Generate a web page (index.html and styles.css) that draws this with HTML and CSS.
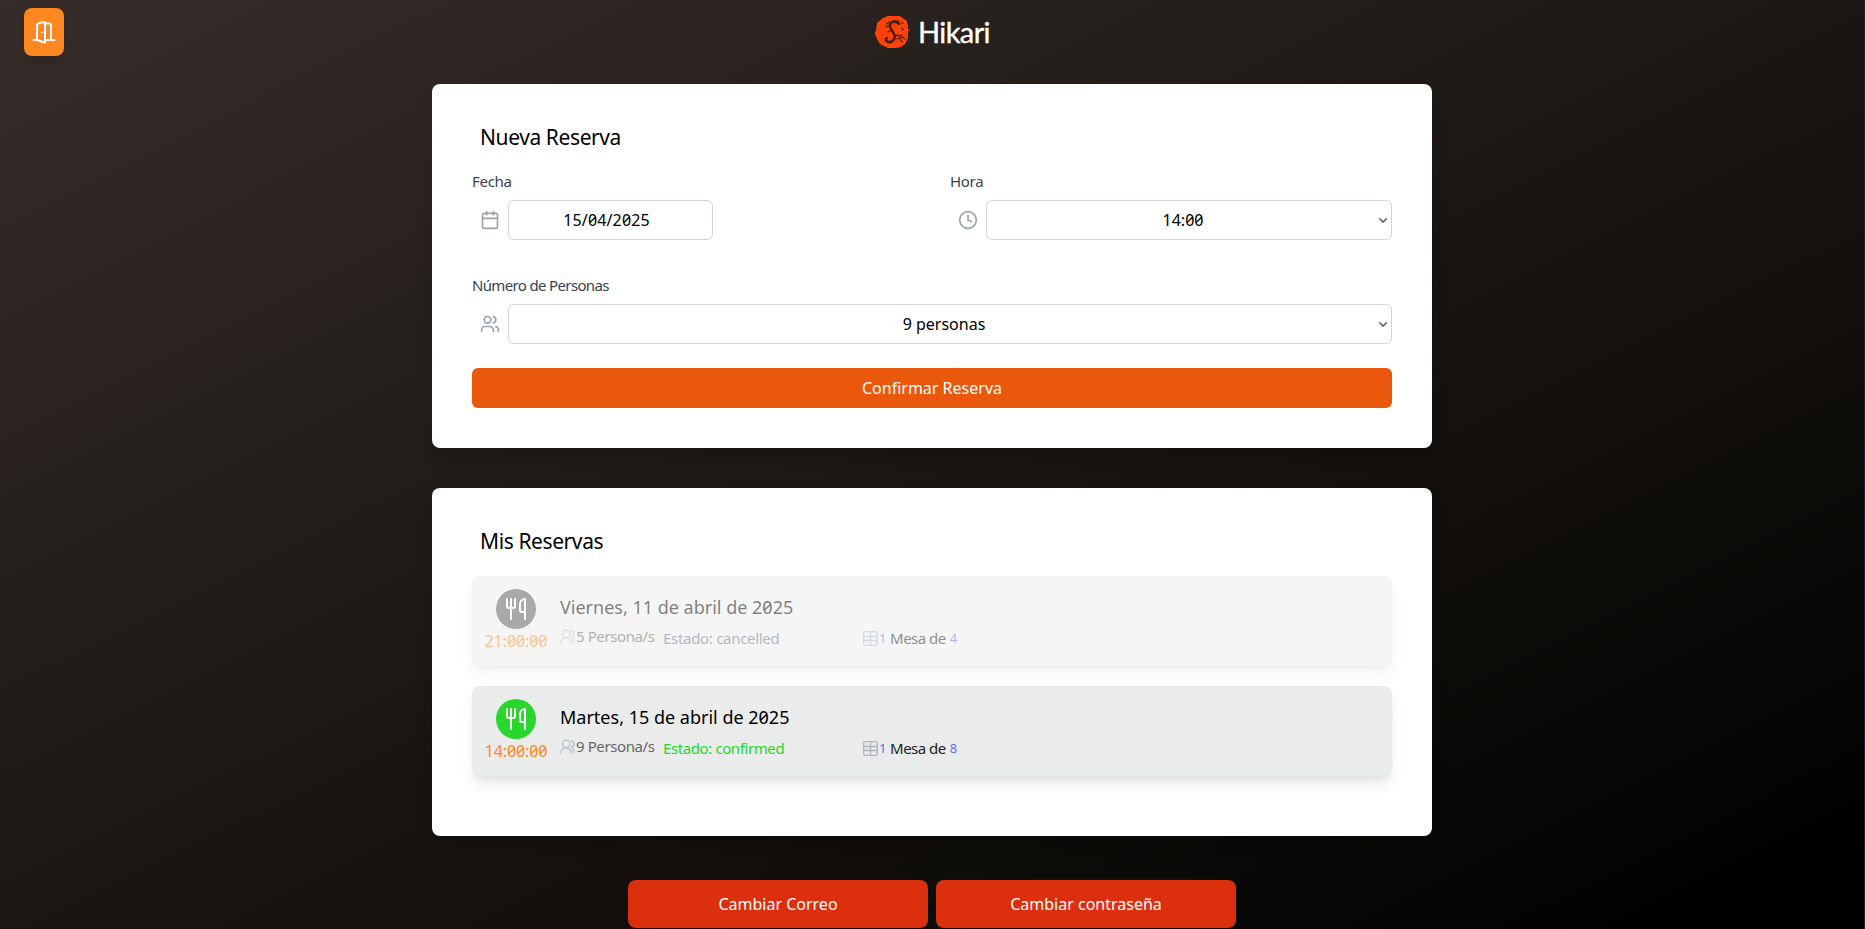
FILE: index.html
```
<!DOCTYPE html>
<html lang="es">
<head>
<meta charset="utf-8">
<title>Hikari - Reservas</title>
<link rel="stylesheet" href="styles.css">
</head>
<body>
<svg class="sprite" xmlns="http://www.w3.org/2000/svg">
  <symbol id="users" viewBox="0 0 24 24"><path d="M16 21v-2a4 4 0 0 0-4-4H6a4 4 0 0 0-4 4v2"/><circle cx="9" cy="7" r="4"/><path d="M22 21v-2a4 4 0 0 0-3-3.87M16 3.13a4 4 0 0 1 0 7.75"/></symbol>
  <symbol id="people" viewBox="1 1.500 22 21"><path d="M18 22a8 8 0 0 0-16 0"/><circle cx="10" cy="8" r="5.500"/><path d="M22 21c0-3.37-2-6.5-4-8a5 5 0 0 0-.45-9.500"/></symbol>
  <symbol id="table" viewBox="1 1 22 22"><rect x="2" y="2" width="20" height="20" rx="2"/><path d="M12 2v20M2 9h20M2 15h20"/></symbol>
  <symbol id="cutlery" viewBox="0 0 24 24"><path d="M3 2v7c0 1.100.9 2 2 2h4a2 2 0 0 0 2-2V2M7 2v20M21 15V2a5 5 0 0 0-5 5v6c0 1.100.9 2 2 2h3Zm0 0v7"/></symbol>
  <symbol id="chevron" viewBox="0 0 10 6"><path d="M1 1l4 4 4-4"/></symbol>
</svg>
<header class="header">
  <button class="exit" aria-label="Salir">
    <svg viewBox="0 0 24 24"><path d="M1.500 20H5V4.200Q8 1.800 13 2.200V22.500Q10 22 5.500 20M13 3.500h4.200q1.800 0 1.800 1.500v15h3.500M13 20h4"/><circle class="knob" cx="10" cy="12.500" r=".6"/></svg>
  </button>
  <div class="brand">
    <svg class="seal" viewBox="0 0 36 34">
      <path class="disc" d="M8 3l5-2 12 0 4 3 3 2 1 5 0 3 2 1-2 1 0 7-3 6-4 3-5 1-8 0-4-2-4-2-3-5-1-3-3-3 3-2 1-8z"/>
      <path class="dragon" d="M24 9Q22 5 17 7q-4 3-1 7t4 8q-2 6-7 5-4-2-1-4"/>
      <path class="scales" d="M14 7l-2 2m1 2l-2 1m4 4l-2 1M21 8l2-2M21 20l4 1 2-1M22 24l5-2 3 2M25 24l2 3M27 13l1 2M27 8l1 0"/>
    </svg>
    <span class="wordmark">Hikari</span>
  </div>
</header>
<main class="content">
  <section class="card card-form">
    <h2>Nueva Reserva</h2>
    <div class="row">
      <div class="field">
        <label>Fecha</label>
        <div class="control">
          <svg class="icon" viewBox="0 0 24 24"><rect x="3" y="4" width="18" height="18" rx="2"/><path d="M8 2v4M16 2v4M3 10h18"/></svg>
          <div class="box date">15/04/2025</div>
        </div>
      </div>
      <div class="field">
        <label>Hora</label>
        <div class="control">
          <svg class="icon" viewBox="0 0 24 24"><circle cx="12" cy="12" r="10"/><path d="M12 6v6l4 2"/></svg>
          <div class="box select"><span>14:00</span><svg class="chevron"><use href="#chevron"/></svg></div>
        </div>
      </div>
    </div>
    <div class="field people-field">
      <label class="tight">Número de Personas</label>
      <div class="control">
        <svg class="icon"><use href="#users"/></svg>
        <div class="box select"><span>9 personas</span><svg class="chevron"><use href="#chevron"/></svg></div>
      </div>
    </div>
    <button class="confirm">Confirmar Reserva</button>
  </section>
  <section class="card card-list">
    <h2>Mis Reservas</h2>
    <article class="booking cancelled">
      <div class="when"><span class="badge"><svg><use href="#cutlery"/></svg></span><span class="time">21:00:00</span></div>
      <div class="info">
        <h3>Viernes, 11 de abril de 2025</h3>
        <div class="details">
          <div class="persons"><svg><use href="#people"/></svg><span>5 Persona/s</span></div>
          <div class="state">Estado: cancelled</div>
          <div class="table"><svg><use href="#table"/></svg><b>1</b><span>Mesa de</span><b>4</b></div>
        </div>
      </div>
    </article>
    <article class="booking confirmed">
      <div class="when"><span class="badge"><svg><use href="#cutlery"/></svg></span><span class="time">14:00:00</span></div>
      <div class="info">
        <h3>Martes, 15 de abril de 2025</h3>
        <div class="details">
          <div class="persons"><svg><use href="#people"/></svg><span>9 Persona/s</span></div>
          <div class="state">Estado: confirmed</div>
          <div class="table"><svg><use href="#table"/></svg><b>1</b><span>Mesa de</span><b>8</b></div>
        </div>
      </div>
    </article>
  </section>
  <div class="actions"><button>Cambiar Correo</button><button>Cambiar contraseña</button></div>
</main>
</body>
</html>
```
FILE: styles.css
```
* { box-sizing: border-box; margin: 0; }
html { background: #20242f; }
body {
  width: 1864px;
  height: 929px;
  overflow: hidden;
  font: 16px/24px "Noto Sans", "Open Sans", sans-serif;
  font-feature-settings: "zero";
  letter-spacing: 0;
  color: #000;
  background: linear-gradient(to bottom right, #362c2a, #2b2120 24%, #27221e 26%, #1b1614 50%, #110d0b 70%, #0d0d0a 72%, #000 96%);
}
svg { fill: none; stroke: currentColor; stroke-width: 2; stroke-linecap: round; stroke-linejoin: round; flex: none; }
.sprite { display: none; }
button { border: 0; font: inherit; font-feature-settings: inherit; letter-spacing: 0; color: #fff; }
.header { height: 64px; display: grid; grid-template-columns: 1fr auto 1fr; padding: 8px 24px; }
.exit { width: 40px; height: 48px; padding: 0; border-radius: 8px; background: #ff871f; display: grid; place-items: center; box-shadow: 0 4px 6px #0002; }
.exit svg { width: 24px; height: 24px; }
.knob { fill: #fff; stroke-width: 1; }
.brand { display: flex; align-items: center; gap: 7px; width: 114px; height: 48px; }
.seal { width: 36px; height: 34px; }
.disc { fill: #ff4208; stroke: none; }
.dragon { stroke: #4a2010; stroke-width: 2.6; }
.scales { stroke: #4a2010; stroke-width: 1.3; }
.wordmark { color: #fff; font: 29px/40px "Lato", sans-serif; letter-spacing: -0.6px; -webkit-text-stroke: 0.4px #fff; }
.content { width: 1000px; margin: 20px 0 0 432px; }
.card { background: #fff; border-radius: 8px; padding: 40px; box-shadow: 0 10px 15px -3px #0003; }
.card-form { height: 364px; }
.card-list { height: 348px; margin-top: 40px; }
h2 { font-size: 21px; line-height: 29px; font-weight: 400; padding-left: 8px; letter-spacing: -0.4px; margin-top: -1px; }
.row { display: grid; grid-template-columns: 442px 442px; gap: 36px; margin-top: 19px; }
label { display: block; font-size: 15px; line-height: 20px; color: #374151; margin-bottom: 9px; letter-spacing: -0.3px; }
.tight { letter-spacing: -0.65px; }
.control { display: flex; align-items: center; padding-left: 8px; gap: 8px; }
.icon { width: 20px; height: 20px; color: #9ca3af; }
.box { height: 40px; border: 1px solid #d1d5db; border-radius: 6px; display: flex; align-items: center; justify-content: center; letter-spacing: 0; }
.date { width: 205px; padding-right: 8px; letter-spacing: 0.15px; }
.select { flex: 1; padding-right: 4px; }
.select span { flex: 1; text-align: center; }
.chevron { width: 8px; height: 5px; color: #666; }
.people-field { margin-top: 35px; }
.confirm { width: 100%; height: 40px; margin-top: 24px; border-radius: 6px; background: #ea580c; }
.booking { height: 90px; border: 1px solid #e5e7eb; border-radius: 8px; background: #eaeceb; padding: 12px 12px 12px 11px; display: flex; gap: 12px; box-shadow: 0 10px 15px -3px #0000001a, 0 4px 6px -4px #0000001a; }
.booking + .booking { margin-top: 20px; }
.cancelled { margin-top: 20px; opacity: .5; }
.when { width: 64px; display: flex; flex-direction: column; align-items: center; }
.badge { width: 40px; height: 40px; border-radius: 50%; background: #29d62b; color: #fff; display: grid; place-items: center; margin-right: 1px; }
.badge svg { width: 24px; height: 24px; }
.cancelled .badge { background: #565656; }
.time { color: #ff871f; letter-spacing: -0.15px; }
.info { padding-top: 5px; }
h3 { font-size: 18px; font-weight: 400; line-height: 26px; letter-spacing: 0; }
.details { display: flex; font-size: 15px; line-height: 20px; margin-top: 6px; letter-spacing: -0.4px; }
.persons { width: 103px; height: 20px; display: flex; align-items: center; color: #666; }
.persons svg { width: 15px; height: 15px; margin-right: 1px; stroke-width: 1.8; color: #b7bdc6; }
.state { width: 200px; color: #6b7280; padding-top: 2px; }
.cancelled .state { letter-spacing: -0.3px; }
.confirmed .state { color: #29d62b; }
.table { display: flex; align-items: center; padding-top: 2px; color: #222; }
.table svg { width: 15px; height: 15px; margin-right: 1px; color: #b0b6c0; }
.table b { color: #5b75ef; font-size: 13px; font-weight: 400; }
.table span { margin: 0 4px; letter-spacing: -0.5px; }
.actions { display: flex; gap: 8px; justify-content: center; margin-top: 44px; }
.actions button { width: 300px; height: 48px; border-radius: 8px; background: #dc2f0d; }
```
